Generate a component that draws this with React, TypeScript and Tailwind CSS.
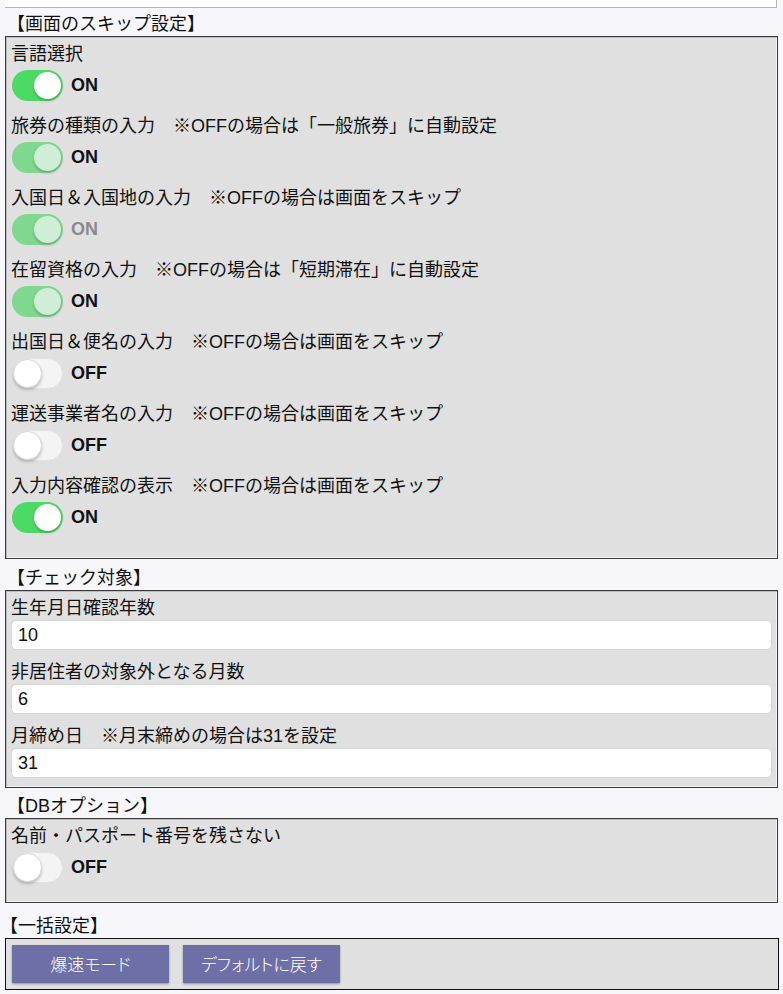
import React from 'react';

type ToggleState = 'on' | 'dim' | 'off';

interface SwitchRow {
  label: string;
  state: ToggleState;
  greyText?: boolean;
}

const skipRows: SwitchRow[] = [
  { label: '言語選択', state: 'on' },
  { label: '旅券の種類の入力　※OFFの場合は「一般旅券」に自動設定', state: 'dim' },
  { label: '入国日＆入国地の入力　※OFFの場合は画面をスキップ', state: 'dim', greyText: true },
  { label: '在留資格の入力　※OFFの場合は「短期滞在」に自動設定', state: 'dim' },
  { label: '出国日＆便名の入力　※OFFの場合は画面をスキップ', state: 'off' },
  { label: '運送事業者名の入力　※OFFの場合は画面をスキップ', state: 'off' },
  { label: '入力内容確認の表示　※OFFの場合は画面をスキップ', state: 'on' },
];

const checkFields = [
  { label: '生年月日確認年数', value: '10' },
  { label: '非居住者の対象外となる月数', value: '6' },
  { label: '月締め日　※月末締めの場合は31を設定', value: '31' },
];

const Toggle = ({ state }: { state: ToggleState }) => {
  if (state === 'off') {
    return (
      <div className="relative w-[51px] h-[31px] rounded-full bg-[#f4f4f4] border border-[#e2e2e2]">
        <div className="absolute left-0 top-0 w-[29px] h-[29px] rounded-full bg-white border border-[#d8d8d8] shadow-[0_2px_3px_rgba(0,0,0,0.22)]" />
      </div>
    );
  }
  const track = state === 'on' ? 'bg-[#4cd964]' : 'bg-[#80d78f]';
  const knob = state === 'on' ? 'bg-white' : 'bg-[#cfeed5]';
  return (
    <div className={`relative w-[51px] h-[31px] rounded-full ${track}`}>
      <div className={`absolute right-[2px] top-[2px] w-[27px] h-[27px] rounded-full ${knob} shadow-[0_2px_3px_rgba(0,0,0,0.2)]`} />
    </div>
  );
};

const Title = ({ children, flush }: { children: React.ReactNode; flush?: boolean }) => (
  <div className={`h-6 leading-6 text-[18px] text-[#111] ${flush ? 'pl-0' : 'pl-[7px]'}`}>{children}</div>
);

const Box = ({ children, className }: { children: React.ReactNode; className?: string }) => (
  <div
    className={`ml-[5px] w-[773px] bg-[#e0e0e0] border border-[#3a3a3a] shadow-[inset_1px_1px_0_#bdbdbd,inset_-1px_-1px_0_#f4f4f4] ${className ?? ''}`}
  >
    {children}
  </div>
);

const Label = ({ children }: { children: React.ReactNode }) => (
  <div className="h-6 leading-6 text-[18px] whitespace-nowrap">{children}</div>
);

export default function App() {
  return (
    <div
      className="min-h-[994px] w-[783px] bg-[#f7f7fb] text-[#111]"
      style={{ fontFamily: '"Liberation Sans", "Noto Sans CJK JP", sans-serif' }}
    >
      <div className="ml-[5px] w-[772px] h-[8px] bg-white border-b border-r border-[#b5b5b5]" />

      <div className="pt-[4px]">
        <Title>【画面のスキップ設定】</Title>
      </div>
      <Box className="pt-[5px] px-[5px] pb-[12px]">
        {skipRows.map((row) => (
          <div key={row.label} className="pb-[13px]">
            <Label>{row.label}</Label>
            <div className="mt-[4px] ml-[1px] flex items-center gap-2">
              <Toggle state={row.state} />
              <span className={`text-[18px] font-bold ${row.greyText ? 'text-[#8a8a8a]' : 'text-[#111]'}`}>
                {row.state === 'off' ? 'OFF' : 'ON'}
              </span>
            </div>
          </div>
        ))}
      </Box>

      <div className="pt-[7px]">
        <Title>【チェック対象】</Title>
      </div>
      <Box className="pt-[5px] px-[5px] pb-[9px]">
        <div className="flex flex-col gap-[10px]">
          {checkFields.map((f) => (
            <div key={f.label}>
              <Label>{f.label}</Label>
              <input
                readOnly
                value={f.value}
                className="block w-[761px] h-[30px] rounded-[5px] bg-white border border-[#d6d6d6] px-[6px] text-[18px] text-[#111] outline-none"
                style={{ fontFamily: '"Liberation Sans", "Noto Sans CJK JP", sans-serif' }}
              />
            </div>
          ))}
        </div>
      </Box>

      <div className="pt-[6px]">
        <Title>【DBオプション】</Title>
      </div>
      <Box className="pt-[5px] px-[5px] pb-[19px]">
        <Label>名前・パスポート番号を残さない</Label>
        <div className="mt-[4px] ml-[1px] flex items-center gap-2">
          <Toggle state="off" />
          <span className="text-[18px] font-bold">OFF</span>
        </div>
      </Box>

      <div className="pt-[11px]">
        <Title flush>【一括設定】</Title>
      </div>
      <div className="ml-[5px] w-[774px] bg-[#e0e0e0] border border-[#111] px-[6px] pt-[6px] pb-[6px] flex gap-[14px]">
        <button
          className="w-[157px] h-[38px] bg-[#6f6fa7] text-white text-[17px] font-light [font-feature-settings:'palt'] shadow-[0_1px_2px_rgba(0,0,0,0.35)]"
          style={{ fontFamily: '"Noto Sans CJK JP", sans-serif' }}
        >
          爆速モード
        </button>
        <button
          className="w-[157px] h-[38px] bg-[#6f6fa7] text-white text-[17px] font-light [font-feature-settings:'palt'] shadow-[0_1px_2px_rgba(0,0,0,0.35)]"
          style={{ fontFamily: '"Noto Sans CJK JP", sans-serif' }}
        >
          デフォルトに戻す
        </button>
      </div>
    </div>
  );
}
